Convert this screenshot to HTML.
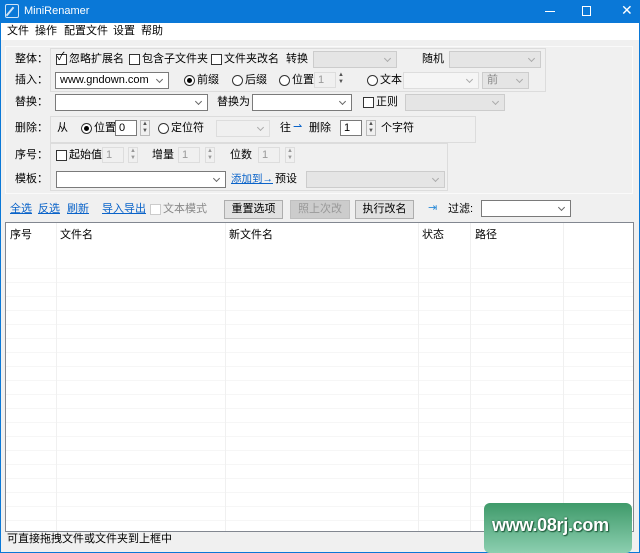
<!DOCTYPE html>
<html><head><meta charset="utf-8">
<style>
*{box-sizing:border-box;margin:0;padding:0}
body{width:640px;height:553px;overflow:hidden;background:#f0f0f0;font-family:"Liberation Sans","Microsoft YaHei","Noto Sans CJK SC",sans-serif;font-size:11px;color:#000;position:relative}
.a{position:absolute;white-space:nowrap}
.t{position:absolute;white-space:nowrap;line-height:14px}
.cb{position:absolute;width:11px;height:11px;border:1px solid #333;background:#fff}
.rb{position:absolute;width:11px;height:11px;border:1px solid #333;border-radius:50%;background:#fff}
.rb.on::after{content:"";position:absolute;left:2px;top:2px;width:5px;height:5px;border-radius:50%;background:#000}
.sel{position:absolute;height:17px;border:1px solid #7a7a7a;background:#fff;padding-left:4px;line-height:15px}
.sel::after{content:"";position:absolute;right:6px;top:4px;width:4px;height:4px;border-right:1px solid #666;border-bottom:1px solid #666;transform:rotate(45deg)}
.dsel{position:absolute;height:17px;border:1px solid #ccc;background:#e5e5e5;color:#888;padding-left:4px;line-height:15px}
.dsel::after{content:"";position:absolute;right:6px;top:4px;width:4px;height:4px;border-right:1px solid #aaa;border-bottom:1px solid #aaa;transform:rotate(45deg)}
.in{position:absolute;height:16px;border:1px solid #7a7a7a;background:#fff;padding-left:3px;line-height:14px}
.din{position:absolute;height:16px;border:1px solid #ddd;background:#f0f0f0;color:#999;padding-left:3px;line-height:14px}
.sp{position:absolute;width:10px;height:16px;border:1px solid #bbb;background:#f0f0f0;font-size:6px;line-height:7px;text-align:center;color:#555}
.lnk{position:absolute;color:#0a63c9;text-decoration:underline;white-space:nowrap;line-height:14px}
.btn{position:absolute;height:19px;border:1px solid #adadad;background:#e1e1e1;text-align:center;line-height:17px}
.grp{position:absolute;border:1px solid #dcdcdc}
</style></head><body>
<div class="a" style="left:0;top:0;width:640px;height:23px;background:#0a78d7"></div>
<div class="a" style="left:5px;top:4px;width:14px;height:14px;border:1px solid #cfe4f7;border-radius:2px"></div>
<div class="a" style="left:9px;top:6px;width:2px;height:11px;background:#cfe4f7;transform:rotate(40deg)"></div>
<div class="t" style="left:24px;top:4px;color:#fff;font-size:11px">MiniRenamer</div>
<div class="a" style="left:545px;top:11px;width:10px;height:1px;background:#fff"></div>
<div class="a" style="left:582px;top:6px;width:9px;height:10px;border:1px solid #fff"></div>
<div class="t" style="left:621px;top:3px;color:#fff;font-size:14px">✕</div>
<div class="a" style="left:0;top:23px;width:1px;height:530px;background:#0a78d7"></div>
<div class="a" style="left:639px;top:23px;width:1px;height:530px;background:#0a78d7"></div>
<div class="a" style="left:1px;top:23px;width:638px;height:17px;background:#fff"></div>
<div class="t" style="left:7px;top:24px">文件</div>
<div class="t" style="left:35px;top:24px">操作</div>
<div class="t" style="left:64px;top:24px">配置文件</div>
<div class="t" style="left:113px;top:24px">设置</div>
<div class="t" style="left:141px;top:24px">帮助</div>

<div class="grp" style="left:5px;top:46px;width:628px;height:148px;border-color:#fafafa"></div>
<div class="grp" style="left:50px;top:48px;width:496px;height:44px"></div>
<div class="grp" style="left:50px;top:116px;width:426px;height:27px"></div>
<div class="grp" style="left:50px;top:143px;width:398px;height:48px"></div>

<div class="t" style="left:15px;top:52px">整体：</div>
<div class="cb" style="left:56px;top:54px"></div><div class="t" style="left:57px;top:50px;font-size:11px">✓</div>
<div class="t" style="left:69px;top:52px">忽略扩展名</div>
<div class="cb" style="left:129px;top:54px"></div><div class="t" style="left:142px;top:52px">包含子文件夹</div>
<div class="cb" style="left:211px;top:54px"></div><div class="t" style="left:224px;top:52px">文件夹改名</div>
<div class="t" style="left:286px;top:52px">转换</div>
<div class="dsel" style="left:313px;top:51px;width:84px"></div>
<div class="t" style="left:422px;top:52px">随机</div>
<div class="dsel" style="left:449px;top:51px;width:92px"></div>

<div class="t" style="left:15px;top:73px">插入：</div>
<div class="sel" style="left:55px;top:72px;width:114px">www.gndown.com</div>
<div class="rb on" style="left:184px;top:75px"></div><div class="t" style="left:197px;top:73px">前缀</div>
<div class="rb" style="left:232px;top:75px"></div><div class="t" style="left:245px;top:73px">后缀</div>
<div class="rb" style="left:279px;top:75px"></div><div class="t" style="left:292px;top:73px">位置</div>
<div class="din" style="left:314px;top:72px;width:22px">1</div><div class="sp" style="left:336px;top:72px;border:none">▲<br>▼</div>
<div class="rb" style="left:367px;top:75px"></div><div class="t" style="left:380px;top:73px">文本</div>
<div class="dsel" style="left:403px;top:72px;width:76px;background:#f5f5f5;border-color:#ddd"></div>
<div class="dsel" style="left:482px;top:72px;width:47px">前</div>

<div class="t" style="left:15px;top:95px">替换：</div>
<div class="sel" style="left:55px;top:94px;width:153px"></div>
<div class="t" style="left:217px;top:95px">替换为</div>
<div class="sel" style="left:252px;top:94px;width:100px"></div>
<div class="cb" style="left:363px;top:97px"></div><div class="t" style="left:376px;top:95px">正则</div>
<div class="dsel" style="left:405px;top:94px;width:100px"></div>

<div class="t" style="left:15px;top:121px">删除：</div>
<div class="t" style="left:57px;top:121px">从</div>
<div class="rb on" style="left:81px;top:123px"></div><div class="t" style="left:94px;top:121px">位置</div>
<div class="in" style="left:115px;top:120px;width:22px">0</div><div class="sp" style="left:140px;top:120px">▲<br>▼</div>
<div class="rb" style="left:158px;top:123px"></div><div class="t" style="left:171px;top:121px">定位符</div>
<div class="dsel" style="left:216px;top:120px;width:54px;background:#f0f0f0;border-color:#ddd"></div>
<div class="t" style="left:280px;top:121px">往</div>
<div class="t" style="left:293px;top:120px;color:#0a63c9">⇀</div>
<div class="t" style="left:309px;top:121px">删除</div>
<div class="in" style="left:340px;top:120px;width:22px">1</div><div class="sp" style="left:366px;top:120px">▲<br>▼</div>
<div class="t" style="left:381px;top:121px">个字符</div>

<div class="t" style="left:15px;top:148px">序号：</div>
<div class="cb" style="left:56px;top:150px"></div><div class="t" style="left:69px;top:148px">起始值</div>
<div class="din" style="left:102px;top:147px;width:22px">1</div><div class="sp" style="left:128px;top:147px;border-color:#ddd;color:#999">▲<br>▼</div>
<div class="t" style="left:152px;top:148px">增量</div>
<div class="din" style="left:178px;top:147px;width:22px">1</div><div class="sp" style="left:205px;top:147px;border-color:#ddd;color:#999">▲<br>▼</div>
<div class="t" style="left:230px;top:148px">位数</div>
<div class="din" style="left:258px;top:147px;width:22px">1</div><div class="sp" style="left:285px;top:147px;border-color:#ddd;color:#999">▲<br>▼</div>

<div class="t" style="left:15px;top:172px">模板：</div>
<div class="sel" style="left:56px;top:171px;width:170px"></div>
<div class="lnk" style="left:231px;top:172px;font-size:10.5px">添加到→</div>
<div class="t" style="left:275px;top:172px">预设</div>
<div class="dsel" style="left:306px;top:171px;width:139px"></div>

<div class="lnk" style="left:10px;top:202px">全选</div>
<div class="lnk" style="left:38px;top:202px">反选</div>
<div class="lnk" style="left:67px;top:202px">刷新</div>
<div class="lnk" style="left:102px;top:202px">导入导出</div>
<div class="cb" style="left:150px;top:204px;border-color:#ccc"></div><div class="t" style="left:163px;top:202px;color:#888">文本模式</div>
<div class="btn" style="left:224px;top:200px;width:59px">重置选项</div>
<div class="btn" style="left:290px;top:200px;width:60px;color:#999;background:#ccc;border-color:#bfbfbf">照上次改</div>
<div class="btn" style="left:355px;top:200px;width:59px">执行改名</div>
<div class="t" style="left:428px;top:201px;color:#2a8ad8">⇥</div>
<div class="t" style="left:448px;top:202px">过滤:</div>
<div class="sel" style="left:481px;top:200px;width:90px"></div>

<div class="a" style="left:5px;top:222px;width:629px;height:310px;border:1px solid #828790;background:#fff repeating-linear-gradient(to bottom,transparent 0,transparent 13px,#f6f6f6 13px,#f6f6f6 14px) 0 32px/100% 100% no-repeat"></div>
<div class="a" style="left:6px;top:223px;width:627px;height:31px;background:#fff"></div>
<div class="a" style="left:56px;top:223px;width:1px;height:308px;background:#f0f0f0"></div>
<div class="a" style="left:225px;top:223px;width:1px;height:308px;background:#f0f0f0"></div>
<div class="a" style="left:418px;top:223px;width:1px;height:308px;background:#f0f0f0"></div>
<div class="a" style="left:470px;top:223px;width:1px;height:308px;background:#f0f0f0"></div>
<div class="a" style="left:563px;top:223px;width:1px;height:308px;background:#f0f0f0"></div>
<div class="t" style="left:10px;top:228px">序号</div>
<div class="t" style="left:60px;top:228px">文件名</div>
<div class="t" style="left:229px;top:228px">新文件名</div>
<div class="t" style="left:422px;top:228px">状态</div>
<div class="t" style="left:475px;top:228px">路径</div>
<div class="t" style="left:7px;top:532px">可直接拖拽文件或文件夹到上框中</div>
<div class="a" style="left:0;top:552px;width:640px;height:1px;background:#0a78d7"></div>

<div class="a" style="left:484px;top:503px;width:148px;height:50px;border-radius:6px;background:linear-gradient(#3f9a6a,#8ccfb0);"></div>
<div class="t" style="left:492px;top:514px;font-size:18px;line-height:22px;letter-spacing:-0.3px;color:#fff;font-weight:bold;text-shadow:0 0 2px #1d5a3a,1px 1px 1px #1d5a3a">www.08rj.com</div>
</body></html>
